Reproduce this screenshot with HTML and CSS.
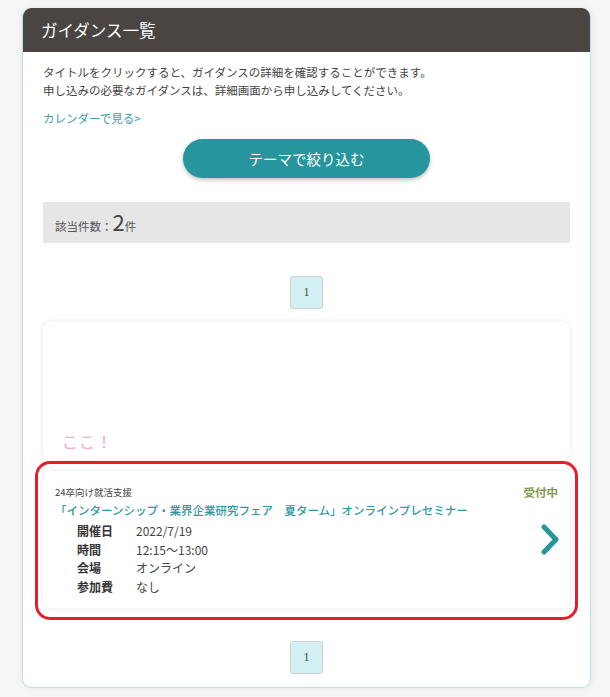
FILE: index.html
```html
<!DOCTYPE html>
<html lang="ja">
<head>
    <meta charset="UTF-8">
    <meta name="viewport" content="width=device-width, initial-scale=1.0">
    <title>ガイダンス一覧</title>
    <link rel="stylesheet" href="styles.css">
</head>
<body>

    <div class="panel">
        <h2 class="panel-title">ガイダンス一覧</h2>
        <div class="panel-body">
            <p class="lead">
                タイトルをクリックすると、ガイダンスの詳細を確認することができます。<br>
                申し込みの必要なガイダンスは、詳細画面から申し込みしてください。
            </p>
            <a class="calendar-link" href="#">カレンダーで見る&gt;</a>
            <div class="filter">
                <button class="filter-btn">テーマで絞り込む</button>
            </div>
            <div class="count">該当件数：<span class="count-num">2</span>件</div>

            <div class="pager"><span class="page">1</span></div>

            <div class="card card-empty">
                <span class="here">ここ！</span>
            </div>

            <div class="marked">
                <div class="card card-item">
                    <div class="item-main">
                        <div class="item-cat">24卒向け就活支援</div>
                        <a class="item-title" href="#">「インターンシップ・業界企業研究フェア　夏ターム」オンラインプレセミナー</a>
                        <dl class="item-info">
                            <dt>開催日</dt><dd>2022/7/19</dd>
                            <dt>時間</dt><dd>12:15～13:00</dd>
                            <dt>会場</dt><dd>オンライン</dd>
                            <dt>参加費</dt><dd>なし</dd>
                        </dl>
                    </div>
                    <div class="item-side">
                        <span class="status">受付中</span>
                        <svg class="arrow" width="18" height="31" viewBox="0 0 18 31">
                            <path d="M3 3 L15 15.5 L3 28" fill="none" stroke="#27959e" stroke-width="5" stroke-linecap="round" stroke-linejoin="round"/>
                        </svg>
                    </div>
                </div>
            </div>

            <div class="pager pager-bottom"><span class="page">1</span></div>
        </div>
    </div>

</body>
</html>
```

FILE: styles.css
```css
body {
    margin: 0;
    padding: 8px 0 8px 22px;
    background-color: #f6f6f6;
    font-family: "Noto Sans CJK JP", "Noto Sans", sans-serif;
    color: #444;
}
.panel {
    width: 569px;
    box-sizing: border-box;
    background: #fff;
    border: 1px solid #b9e0e5;
    border-top: none;
    border-radius: 9px;
    box-shadow: 0 0 8px rgba(0, 0, 0, 0.07);
    overflow: hidden;
}
.panel-title {
    margin: 0;
    height: 44px;
    line-height: 44px;
    padding-left: 18px;
    background-color: #4a4542;
    color: #fff;
    font-size: 16.5px;
    font-weight: normal;
}
.panel-body {
    padding: 0 20px 13px;
}
.lead {
    margin: 11px 0 0;
    font-size: 11.5px;
    line-height: 18px;
}
.calendar-link {
    display: block;
    margin-top: 10px;
    font-size: 11.5px;
    line-height: 18px;
    color: #3a9ea6;
    text-decoration: none;
}
.filter {
    display: flex;
    justify-content: center;
    margin-top: 12px;
}
.filter-btn {
    width: 247px;
    height: 39px;
    border: none;
    border-radius: 20px;
    background-color: #27959e;
    color: #fff;
    font-family: inherit;
    font-size: 14.5px;
    box-shadow: 0 2px 4px rgba(0, 0, 0, 0.25);
}
.count {
    margin-top: 24px;
    height: 41px;
    box-sizing: border-box;
    padding: 3px 12px 0;
    background-color: #e6e6e6;
    font-size: 11.5px;
    color: #555;
}
.count-num {
    font-size: 22px;
    color: #444;
}
.pager {
    display: flex;
    justify-content: center;
    margin-top: 33px;
}
.pager-bottom {
    margin-top: 21px;
}
.page {
    width: 33px;
    height: 33px;
    box-sizing: border-box;
    display: flex;
    align-items: center;
    justify-content: center;
    background-color: #d3f1f4;
    border: 1px solid #d0d0d0;
    border-radius: 3px;
    font-family: "Liberation Serif", serif;
    font-size: 12px;
    color: #444;
}
.card {
    background: #fff;
    border-radius: 8px;
    box-shadow: 0 0 6px rgba(0, 0, 0, 0.09);
}
.card-empty {
    margin-top: 13px;
    height: 138px;
    box-sizing: border-box;
    display: flex;
    align-items: flex-end;
    padding: 0 19px 7px;
}
.here {
    font-size: 16px;
    color: #f7a6d6;
    letter-spacing: 1px;
}
.marked {
    margin: 1px -8px 0;
    padding: 7px 5px 9px;
    border: 3px solid #e41f2b;
    border-radius: 15px;
}
.card-item {
    display: flex;
    height: 137px;
    box-sizing: border-box;
    padding: 14px 12px 0;
}
.item-main {
    flex: 1;
}
.item-cat {
    font-size: 9.5px;
    line-height: 14px;
    color: #444;
}
.item-title {
    display: block;
    margin-top: 2px;
    font-size: 11.5px;
    line-height: 18px;
    font-weight: 500;
    color: #2b99a1;
    text-decoration: none;
}
.item-info {
    display: grid;
    grid-template-columns: 59px 1fr;
    margin: 3px 0 0 22px;
    font-size: 12px;
    line-height: 18.5px;
}
.item-info dt {
    font-weight: bold;
    color: #333;
}
.item-info dd {
    margin: 0;
    color: #444;
}
.item-side {
    display: flex;
    flex-direction: column;
    align-items: flex-end;
}
.status {
    font-size: 11.5px;
    line-height: 14px;
    font-weight: bold;
    color: #7e9c4f;
}
.arrow {
    margin-top: 25px;
    margin-right: -1px;
}
```
